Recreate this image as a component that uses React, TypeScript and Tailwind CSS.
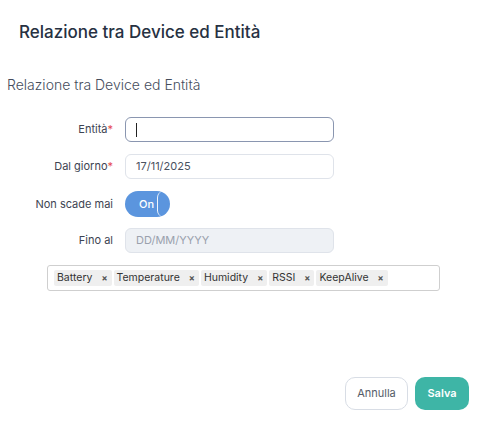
import React from "react";

const font = { fontFamily: "Inter, 'Noto Sans', sans-serif" };

function Label({ text, req }: { text: string; req?: boolean }) {
  return (
    <div className="w-[114px] pr-[1px] text-right text-[11px] text-[#3d4452]">
      {text}
      {req && <span className="text-[#e5484d]">*</span>}
    </div>
  );
}

function Tag({ t }: { t: string }) {
  return (
    <span className="flex h-[16px] items-center gap-[9px] rounded-[2px] bg-[#efefef] pl-[3px] pr-[4px] text-[10.5px] text-[#333]">
      {t}
      <span className="text-[9px] font-bold text-[#555]">×</span>
    </span>
  );
}

export default function App() {
  return (
    <div style={font} className="flex h-[422px] w-[482px] flex-col bg-white">
      <div className="pl-[19px] pt-[20px] text-[17px] font-medium leading-[24px] text-[#273142]">
        Relazione tra Device ed Entità
      </div>
      <div className="pl-[7px] pt-[31px] text-[14px] font-light leading-[20px] text-[#454d5c]">
        Relazione tra Device ed Entità
      </div>
      <div className="mt-[22px] flex flex-col">
        <div className="flex items-center gap-[11px]">
          <Label text="Entità" req />
          <div className="flex h-[25px] w-[209px] items-center rounded-[6px] border border-[#8a96b0] pl-[10px]">
            <span className="h-[14px] w-[1px] bg-[#222]" />
          </div>
        </div>
        <div className="mt-[12px] flex items-center gap-[11px]">
          <Label text="Dal giorno" req />
          <div className="flex h-[25px] w-[209px] items-center rounded-[6px] border border-[#dfe3ea] pl-[10px] text-[11px] text-[#4a5160]">
            17/11/2025
          </div>
        </div>
        <div className="mt-[12px] flex items-center gap-[11px]">
          <Label text="Non scade mai" />
          <div className="relative flex h-[26px] w-[45px] items-center rounded-full bg-[#5b95de] pl-[14px] text-[11px] font-medium text-white">
            On
            <span className="absolute right-[0px] top-[0px] h-[26px] w-[13px] rounded-full border-l border-white/90" />
          </div>
        </div>
        <div className="mt-[11px] flex items-center gap-[11px]">
          <Label text="Fino al" />
          <div className="flex h-[25px] w-[209px] items-center rounded-[6px] border border-[#dfe3ea] bg-[#eef1f5] pl-[10px] text-[11px] text-[#9aa1ad]">
            DD/MM/YYYY
          </div>
        </div>
      </div>
      <div className="ml-[47px] mt-[12px] flex h-[26px] w-[393px] items-center gap-[2px] rounded-[3px] border border-[#cfcfcf] pl-[6px]">
        <Tag t="Battery" />
        <Tag t="Temperature" />
        <Tag t="Humidity" />
        <Tag t="RSSI" />
        <Tag t="KeepAlive" />
      </div>
      <div className="mt-[86px] flex justify-end gap-[7px] pr-[13px]">
        <button className="h-[33px] w-[63px] rounded-[10px] border border-[#d8dde5] bg-white text-[11px] text-[#555c68]">
          Annulla
        </button>
        <button className="h-[33px] w-[54px] rounded-[10px] bg-[#3eb5a6] text-[11px] font-semibold text-white">
          Salva
        </button>
      </div>
    </div>
  );
}
